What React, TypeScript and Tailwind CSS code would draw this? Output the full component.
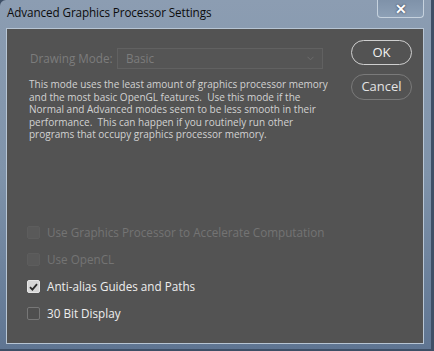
import React from "react";

const uiFont = { fontFamily: '"Open Sans", "Noto Sans", sans-serif' };

function Check({ label, checked, disabled }: { label: string; checked?: boolean; disabled?: boolean }) {
	return (
		<div className="flex items-center h-[27px] whitespace-nowrap">
			<span
				className={
					"w-[13px] h-[13px] rounded-[2px] flex items-center justify-center shrink-0 " +
					(checked
						? "bg-[#d6d6d6] border border-[#e6e6e6]"
						: disabled
							? "bg-[#595959] border border-[#5d5d5d]"
							: "bg-[#4f4f4f] border border-[#777777]")
				}
			>
				{checked && (
					<svg width="9" height="8" viewBox="0 0 9 8">
						<path d="M1 4.2 L3.4 6.6 L8 1.2" stroke="#2a2a2a" strokeWidth="1.8" fill="none" />
					</svg>
				)}
			</span>
			<span
				className={
					"ml-[7px] text-[11.7px] " + (disabled ? "text-[#747474]" : "text-[#eeeeee]")
				}
			>
				{label}
			</span>
		</div>
	);
}

export default function App() {
	return (
		<div className="w-[434px] h-[351px] bg-[#3e4f66] overflow-hidden" style={uiFont}>
			<div className="w-[431px] h-[349px] bg-gradient-to-b from-[#8c9db2] via-[#7f93aa] to-[#5f7592] rounded-tl-[6px] flex flex-col relative">
				<div className="h-[28px] flex items-center pl-[7px] pb-[3px] relative">
					<span className="text-[11.7px] text-[#0c0c0c] tracking-[-0.1px] whitespace-nowrap">
						Advanced Graphics Processor Settings
					</span>
					<div className="absolute left-[377px] top-0 w-[47px] h-[18px] rounded-b-[4px] border border-t-0 border-[#c6d2de] bg-gradient-to-b from-[#7f92a9] to-[#8da0b6] flex items-center justify-center">
						<span className="text-[14px] font-bold text-white leading-none [text-shadow:0_0_2px_#223]">✕</span>
					</div>
				</div>
				<div className="ml-[6px] mr-[7px] mb-[5px] flex-1 border border-[#b7c5d4] flex">
					<div className="flex-1 bg-[#535353] flex">
						<div className="w-[332px] pl-[22px] pt-[19px] flex flex-col">
							<div className="flex items-center whitespace-nowrap">
								<span className="text-[11.7px] text-[#7c7c7c] w-[88px] pl-[1px]">Drawing Mode:</span>
								<div className="w-[206px] h-[21px] border border-[#616161] bg-[#555555] flex items-center justify-between px-[8px]">
									<span className="text-[11.7px] text-[#7c7c7c]">Basic</span>
									<svg width="7" height="5" viewBox="0 0 7 5">
										<path d="M0.5 0.8 L3.5 3.8 L6.5 0.8" stroke="#6c6c6c" fill="none" />
									</svg>
								</div>
							</div>
							<p className="mt-[9px] text-[10px] leading-[12.5px] text-[#d2d2d2] w-[300px]">
								This mode uses the least amount of graphics processor memory and the most basic OpenGL features.&nbsp; Use this mode if the Normal and Advanced modes seem to be less smooth in their performance.&nbsp; This can happen if you routinely run other programs that occupy graphics processor memory.
							</p>
							<div className="mt-auto mb-[16px] -ml-[2px] flex flex-col">
								<Check label="Use Graphics Processor to Accelerate Computation" disabled />
								<Check label="Use OpenCL" disabled />
								<Check label="Anti-alias Guides and Paths" checked />
								<Check label="30 Bit Display" />
							</div>
						</div>
						<div className="pt-[11px] pl-[12px] flex flex-col gap-[9px]">
							<button className="w-[61px] h-[25px] rounded-full border border-[#cfcfcf] text-[13px] text-[#f2f2f2]">
								OK
							</button>
							<button className="w-[61px] h-[26px] rounded-full border border-[#7a7a7a] text-[13px] text-[#e4e4e4]">
								Cancel
							</button>
						</div>
					</div>
				</div>
			</div>
		</div>
	);
}
